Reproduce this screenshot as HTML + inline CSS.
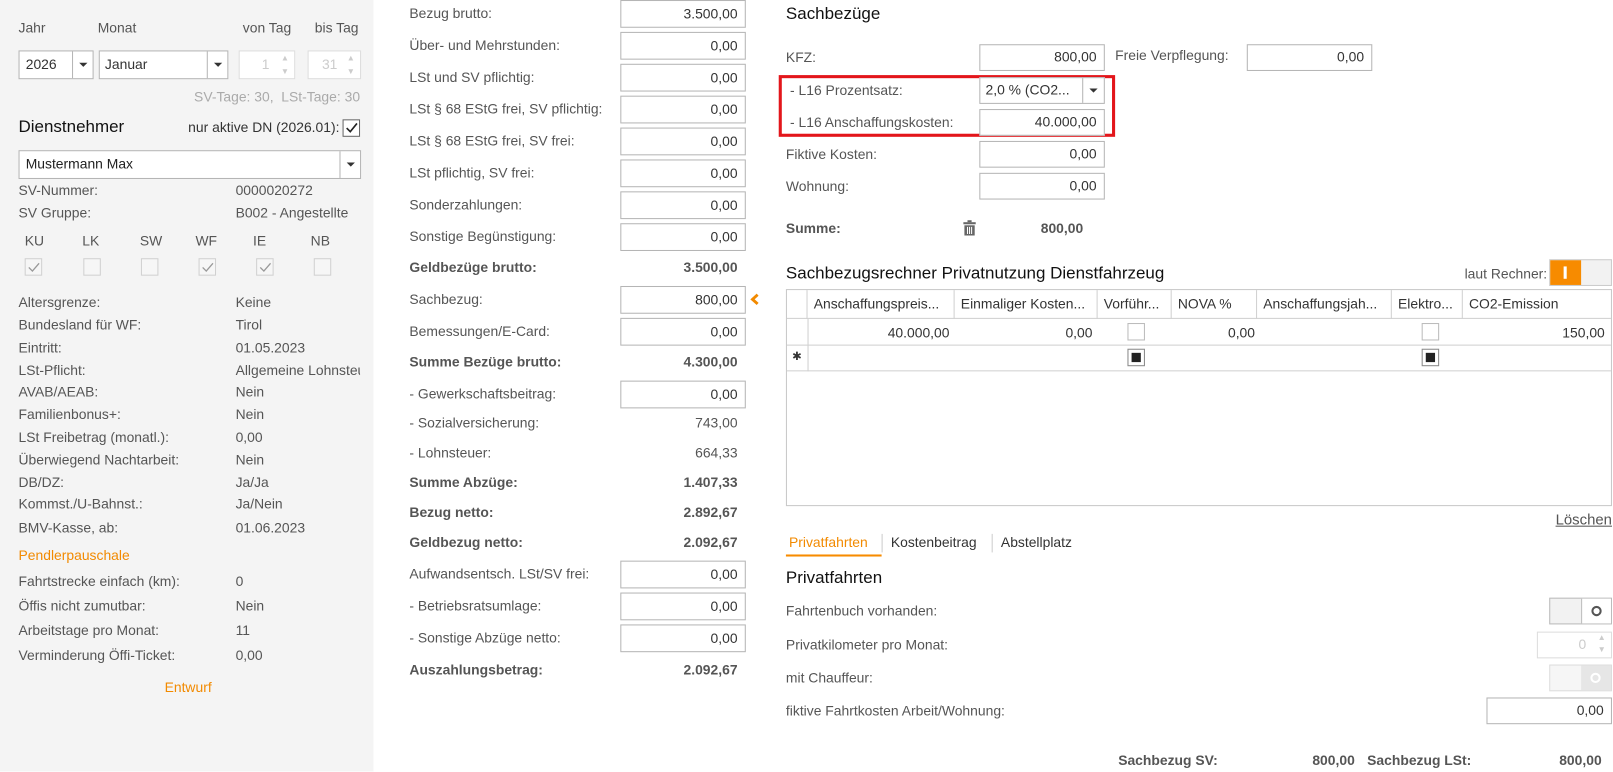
<!DOCTYPE html>
<html><head><meta charset="utf-8">
<style>
*{box-sizing:border-box;margin:0;padding:0}
html,body{width:1613px;height:771px;overflow:hidden;background:#fff}
#w{position:absolute;left:0;top:0;width:1568px;height:750px;transform:scale(1.0287);transform-origin:0 0;font-family:"Liberation Sans",sans-serif;font-size:13.5px;color:#555}
.a{position:absolute;white-space:nowrap}
.c{transform:translateY(-50%)}
.in{position:absolute;border:1px solid #b5b5b5;background:#fff;text-align:right;padding-right:7px;color:#333;font-size:13.5px}
.b{font-weight:bold;color:#555}
.cb{position:absolute;width:17px;height:17px;border:1px solid #bbb;background:#fff}
.cbd{border-color:#d0d0d0;background:#f6f6f6}
.cbd svg{position:absolute;left:2px;top:2px}
.arr{position:absolute;top:0;right:0;bottom:0;border-left:1px solid #b5b5b5}
.arr:after{content:"";position:absolute;left:50%;top:50%;margin:-2px 0 0 -4px;border:4px solid transparent;border-top:4px solid #333;border-bottom:0}
.or{color:#f28a00}
.th{position:absolute;top:0;height:28px;line-height:28px;border-right:1px solid #d0d0d0;padding-left:6px;color:#333;font-size:13.5px;overflow:hidden}
</style></head><body><div id="w">
<div class="a" style="left:0;top:0;width:363px;height:750px;background:#f4f4f4"></div>
<div class="a c" style="left:18px;top:27px">Jahr</div>
<div class="a c" style="left:95px;top:27px">Monat</div>
<div class="a c" style="left:236px;top:27px">von Tag</div>
<div class="a c" style="left:306px;top:27px">bis Tag</div>
<div class="in" style="left:18px;top:49px;width:73px;height:28px;text-align:left;padding-left:6px;line-height:26px">2026<div class="arr" style="width:20px"></div></div>
<div class="in" style="left:96px;top:49px;width:126px;height:28px;text-align:left;padding-left:5px;line-height:26px">Januar<div class="arr" style="width:20px"></div></div>
<div class="in" style="left:232px;top:49px;width:55px;height:28px;line-height:26px;color:#ccc;border-color:#ddd;padding-right:24px">1<span class="a" style="right:5px;top:0;font-size:8px;line-height:13px;color:#ccc">▲<br>▼</span></div>
<div class="in" style="left:299px;top:49px;width:52px;height:28px;line-height:26px;color:#ccc;border-color:#ddd;padding-right:22px">31<span class="a" style="right:5px;top:0;font-size:8px;line-height:13px;color:#ccc">▲<br>▼</span></div>
<div class="a c" style="right:1218px;top:94px;color:#aaa">SV-Tage: 30,&nbsp; LSt-Tage: 30</div>
<div class="a c" style="left:18px;top:124px;font-size:16.5px;color:#111">Dienstnehmer</div>
<div class="a c" style="right:1238px;top:124px;color:#333">nur aktive DN (2026.01):</div>
<div class="cb" style="left:333px;top:116px;border-color:#666"><svg width="15" height="15" style="position:absolute;left:0;top:0"><path d="M3 7.5 L6.5 11 L13 3" stroke="#222" stroke-width="1.6" fill="none"/></svg></div>
<div class="in" style="left:18px;top:146px;width:333px;height:28px;text-align:left;padding-left:6px;line-height:26px;color:#222">Mustermann Max<div class="arr" style="width:20px"></div></div>
<div class="a c" style="left:18px;top:185px">SV-Nummer:</div><div class="a c" style="left:229px;top:185px">0000020272</div>
<div class="a c" style="left:18px;top:207px">SV Gruppe:</div><div class="a c" style="left:229px;top:207px">B002 - Angestellte</div>
<div class="a c" style="left:24px;top:234px">KU</div><div class="a c" style="left:80px;top:234px">LK</div><div class="a c" style="left:136px;top:234px">SW</div><div class="a c" style="left:190px;top:234px">WF</div><div class="a c" style="left:246px;top:234px">IE</div><div class="a c" style="left:302px;top:234px">NB</div>
<div class="cb cbd" style="left:24px;top:251px"><svg width="12" height="12"><path d="M1 6 L4.5 9.5 L11 2" stroke="#999" stroke-width="1.3" fill="none"/></svg></div>
<div class="cb cbd" style="left:81px;top:251px"></div>
<div class="cb cbd" style="left:137px;top:251px"></div>
<div class="cb cbd" style="left:193px;top:251px"><svg width="12" height="12"><path d="M1 6 L4.5 9.5 L11 2" stroke="#999" stroke-width="1.3" fill="none"/></svg></div>
<div class="cb cbd" style="left:249px;top:251px"><svg width="12" height="12"><path d="M1 6 L4.5 9.5 L11 2" stroke="#999" stroke-width="1.3" fill="none"/></svg></div>
<div class="cb cbd" style="left:305px;top:251px"></div>
<div class="a c" style="left:18px;top:294px">Altersgrenze:</div><div class="a c" style="left:229px;top:294px">Keine</div>
<div class="a c" style="left:18px;top:316px">Bundesland für WF:</div><div class="a c" style="left:229px;top:316px">Tirol</div>
<div class="a c" style="left:18px;top:338px">Eintritt:</div><div class="a c" style="left:229px;top:338px">01.05.2023</div>
<div class="a c" style="left:18px;top:360px">LSt-Pflicht:</div><div class="a c" style="left:229px;top:360px;width:121px;overflow:hidden">Allgemeine Lohnsteuer</div>
<div class="a c" style="left:18px;top:381px">AVAB/AEAB:</div><div class="a c" style="left:229px;top:381px">Nein</div>
<div class="a c" style="left:18px;top:403px">Familienbonus+:</div><div class="a c" style="left:229px;top:403px">Nein</div>
<div class="a c" style="left:18px;top:425px">LSt Freibetrag (monatl.):</div><div class="a c" style="left:229px;top:425px">0,00</div>
<div class="a c" style="left:18px;top:447px">Überwiegend Nachtarbeit:</div><div class="a c" style="left:229px;top:447px">Nein</div>
<div class="a c" style="left:18px;top:469px">DB/DZ:</div><div class="a c" style="left:229px;top:469px">Ja/Ja</div>
<div class="a c" style="left:18px;top:490px">Kommst./U-Bahnst.:</div><div class="a c" style="left:229px;top:490px">Ja/Nein</div>
<div class="a c" style="left:18px;top:513px">BMV-Kasse, ab:</div><div class="a c" style="left:229px;top:513px">01.06.2023</div>
<div class="a c or" style="left:18px;top:540px">Pendlerpauschale</div>
<div class="a c" style="left:18px;top:565px">Fahrtstrecke einfach (km):</div><div class="a c" style="left:229px;top:565px">0</div>
<div class="a c" style="left:18px;top:589px">Öffis nicht zumutbar:</div><div class="a c" style="left:229px;top:589px">Nein</div>
<div class="a c" style="left:18px;top:613px">Arbeitstage pro Monat:</div><div class="a c" style="left:229px;top:613px">11</div>
<div class="a c" style="left:18px;top:637px">Verminderung Öffi-Ticket:</div><div class="a c" style="left:229px;top:637px">0,00</div>
<div class="a c or" style="left:160px;top:668px">Entwurf</div>

<!-- middle -->
<div class="a c" style="left:398px;top:13px">Bezug brutto:</div><div class="in" style="left:603px;top:0;width:122px;height:27px;line-height:25px">3.500,00</div>
<div class="a c" style="left:398px;top:44px">Über- und Mehrstunden:</div><div class="in" style="left:603px;top:31px;width:122px;height:27px;line-height:25px">0,00</div>
<div class="a c" style="left:398px;top:75px">LSt und SV pflichtig:</div><div class="in" style="left:603px;top:62px;width:122px;height:27px;line-height:25px">0,00</div>
<div class="a c" style="left:398px;top:106px">LSt § 68 EStG frei, SV pflichtig:</div><div class="in" style="left:603px;top:93px;width:122px;height:27px;line-height:25px">0,00</div>
<div class="a c" style="left:398px;top:137px">LSt § 68 EStG frei, SV frei:</div><div class="in" style="left:603px;top:124px;width:122px;height:27px;line-height:25px">0,00</div>
<div class="a c" style="left:398px;top:168px">LSt pflichtig, SV frei:</div><div class="in" style="left:603px;top:155px;width:122px;height:27px;line-height:25px">0,00</div>
<div class="a c" style="left:398px;top:199px">Sonderzahlungen:</div><div class="in" style="left:603px;top:186px;width:122px;height:27px;line-height:25px">0,00</div>
<div class="a c" style="left:398px;top:230px">Sonstige Begünstigung:</div><div class="in" style="left:603px;top:217px;width:122px;height:27px;line-height:25px">0,00</div>
<div class="a c b" style="left:398px;top:260px">Geldbezüge brutto:</div><div class="a c b" style="right:851px;top:260px">3.500,00</div>
<div class="a c" style="left:398px;top:291px">Sachbezug:</div><div class="in" style="left:603px;top:278px;width:122px;height:27px;line-height:25px">800,00</div>
<svg class="a" style="left:729px;top:285px" width="10" height="12"><path d="M7.5 1.5 L2.5 6 L7.5 10.5" stroke="#f28a00" stroke-width="2.8" fill="none"/></svg>
<div class="a c" style="left:398px;top:322px">Bemessungen/E-Card:</div><div class="in" style="left:603px;top:309px;width:122px;height:27px;line-height:25px">0,00</div>
<div class="a c b" style="left:398px;top:352px">Summe Bezüge brutto:</div><div class="a c b" style="right:851px;top:352px">4.300,00</div>
<div class="a c" style="left:398px;top:383px">- Gewerkschaftsbeitrag:</div><div class="in" style="left:603px;top:370px;width:122px;height:27px;line-height:25px">0,00</div>
<div class="a c" style="left:398px;top:411px">- Sozialversicherung:</div><div class="a c" style="right:851px;top:411px">743,00</div>
<div class="a c" style="left:398px;top:440px">- Lohnsteuer:</div><div class="a c" style="right:851px;top:440px">664,33</div>
<div class="a c b" style="left:398px;top:469px">Summe Abzüge:</div><div class="a c b" style="right:851px;top:469px">1.407,33</div>
<div class="a c b" style="left:398px;top:498px">Bezug netto:</div><div class="a c b" style="right:851px;top:498px">2.892,67</div>
<div class="a c b" style="left:398px;top:527px">Geldbezug netto:</div><div class="a c b" style="right:851px;top:527px">2.092,67</div>
<div class="a c" style="left:398px;top:558px">Aufwandsentsch. LSt/SV frei:</div><div class="in" style="left:603px;top:545px;width:122px;height:27px;line-height:25px">0,00</div>
<div class="a c" style="left:398px;top:589px">- Betriebsratsumlage:</div><div class="in" style="left:603px;top:576px;width:122px;height:27px;line-height:25px">0,00</div>
<div class="a c" style="left:398px;top:620px">- Sonstige Abzüge netto:</div><div class="in" style="left:603px;top:607px;width:122px;height:27px;line-height:25px">0,00</div>
<div class="a c b" style="left:398px;top:651px">Auszahlungsbetrag:</div><div class="a c b" style="right:851px;top:651px">2.092,67</div>

<!-- right -->
<div class="a c" style="left:764px;top:14px;font-size:16.5px;color:#111">Sachbezüge</div>
<div class="a c" style="left:764px;top:56px">KFZ:</div><div class="in" style="left:952px;top:43px;width:122px;height:26px;line-height:24px">800,00</div>
<div class="a c" style="left:1084px;top:54px">Freie Verpflegung:</div><div class="in" style="left:1212px;top:43px;width:122px;height:26px;line-height:24px">0,00</div>
<div class="a" style="left:757px;top:73px;width:327px;height:60px;border:3px solid #e3161b"></div>
<div class="a c" style="left:768px;top:88px">- L16 Prozentsatz:</div>
<div class="in" style="left:952px;top:75px;width:122px;height:26px;line-height:24px;text-align:left;padding-left:5px">2,0 % (CO2...<div class="arr" style="width:21px"></div></div>
<div class="a c" style="left:768px;top:119px">- L16 Anschaffungskosten:</div><div class="in" style="left:952px;top:106px;width:122px;height:26px;line-height:24px">40.000,00</div>
<div class="a c" style="left:764px;top:150px">Fiktive Kosten:</div><div class="in" style="left:952px;top:137px;width:122px;height:26px;line-height:24px">0,00</div>
<div class="a c" style="left:764px;top:181px">Wohnung:</div><div class="in" style="left:952px;top:168px;width:122px;height:26px;line-height:24px">0,00</div>
<div class="a c b" style="left:764px;top:222px">Summe:</div>
<svg class="a" style="left:936px;top:214px" width="13" height="15"><rect x="0.5" y="2" width="12" height="2" fill="#666"/><rect x="4.5" y="0" width="4" height="2" fill="#666"/><rect x="1.5" y="5" width="10" height="10" fill="#666"/><path d="M4.5 6.5V13.5M6.5 6.5V13.5M8.5 6.5V13.5" stroke="#fff" stroke-width="1"/></svg>
<div class="a c b" style="right:515px;top:222px">800,00</div>

<div class="a c" style="left:764px;top:266px;font-size:16.5px;color:#111">Sachbezugsrechner Privatnutzung Dienstfahrzeug</div>
<div class="a c" style="right:64px;top:266px">laut Rechner:</div>
<div class="a" style="left:1506px;top:252px;width:61px;height:26px;border:1px solid #ccc;background:#f2f2f2"><div style="position:absolute;left:0;top:0;width:30px;height:24px;background:#f78b00"><div style="position:absolute;left:13px;top:6px;width:3px;height:12px;background:#fff"></div></div></div>
<div class="a" style="left:764px;top:281px;width:803px;height:211px;border:1px solid #c8c8c8;background:#fff">
 <div style="position:absolute;left:0;top:0;width:801px;height:28px;border-bottom:1px solid #d0d0d0"></div>
 <div class="th" style="left:0;width:20px;padding:0"></div>
 <div class="th" style="left:20px;width:143px">Anschaffungspreis...</div>
 <div class="th" style="left:163px;width:139px">Einmaliger Kosten...</div>
 <div class="th" style="left:302px;width:72px">Vorführ...</div>
 <div class="th" style="left:374px;width:83px">NOVA %</div>
 <div class="th" style="left:457px;width:131px">Anschaffungsjah...</div>
 <div class="th" style="left:588px;width:69px">Elektro...</div>
 <div class="th" style="left:657px;width:144px;border-right:0">CO2-Emission</div>
 <div style="position:absolute;left:0;top:53px;width:801px;border-top:1px solid #d0d0d0"></div>
 <div style="position:absolute;left:0;top:78px;width:801px;border-top:1px solid #d0d0d0"></div>
 <div style="position:absolute;left:20px;top:28px;height:51px;border-left:1px solid #d0d0d0"></div>
 <div class="a" style="right:643px;top:34px;color:#333">40.000,00</div>
 <div class="a" style="right:504px;top:34px;color:#333">0,00</div>
 <div class="a" style="right:346px;top:34px;color:#333">0,00</div>
 <div class="a" style="right:6px;top:34px;color:#333">150,00</div>
 <div class="cb" style="left:331px;top:32px"></div><div class="cb" style="left:617px;top:32px"></div>
 <div class="cb" style="left:331px;top:57px;border-color:#888"><div style="position:absolute;left:3px;top:3px;width:9px;height:9px;background:#222"></div></div>
 <div class="cb" style="left:617px;top:57px;border-color:#888"><div style="position:absolute;left:3px;top:3px;width:9px;height:9px;background:#222"></div></div>
 <div class="a" style="left:5px;top:58px;font-size:11px;color:#333">✱</div>
</div>
<div class="a c" style="right:1px;top:506px;text-decoration:underline;font-size:14.5px">Löschen</div>
<div class="a c or" style="left:767px;top:527px">Privatfahrten</div>
<div class="a" style="left:764px;top:539px;width:93px;height:2px;background:#f78b00"></div>
<div class="a" style="left:857px;top:519px;height:18px;border-left:1px solid #ccc"></div>
<div class="a c" style="left:866px;top:527px;color:#333">Kostenbeitrag</div>
<div class="a" style="left:964px;top:519px;height:18px;border-left:1px solid #ccc"></div>
<div class="a c" style="left:973px;top:527px;color:#333">Abstellplatz</div>
<div class="a c" style="left:764px;top:562px;font-size:16.5px;color:#111">Privatfahrten</div>
<div class="a c" style="left:764px;top:594px">Fahrtenbuch vorhanden:</div>
<div class="a" style="left:1506px;top:581px;width:61px;height:26px;border:1px solid #bbb;background:#f2f2f2"><div style="position:absolute;left:30px;top:0;width:29px;height:24px;background:#fff;border-left:1px solid #bbb"><div style="position:absolute;left:9px;top:7px;width:10px;height:10px;border:2px solid #555;border-radius:50%"></div></div></div>
<div class="a c" style="left:764px;top:627px">Privatkilometer pro Monat:</div>
<div class="in" style="left:1494px;top:614px;width:73px;height:26px;line-height:24px;color:#ccc;border-color:#ddd;padding-right:24px">0<span class="a" style="right:5px;top:-1px;font-size:8px;line-height:12px;color:#ccc">▲<br>▼</span></div>
<div class="a c" style="left:764px;top:659px">mit Chauffeur:</div>
<div class="a" style="left:1506px;top:646px;width:61px;height:26px;border:1px solid #ddd;background:#f6f6f6"><div style="position:absolute;left:30px;top:0;width:29px;height:24px;background:#e6e6e6"><div style="position:absolute;left:9px;top:7px;width:10px;height:10px;border:2px solid #fff;border-radius:50%"></div></div></div>
<div class="a c" style="left:764px;top:691px">fiktive Fahrtkosten Arbeit/Wohnung:</div>
<div class="in" style="left:1445px;top:678px;width:122px;height:26px;line-height:24px">0,00</div>
<div class="a c b" style="left:1087px;top:739px">Sachbezug SV:</div><div class="a c b" style="right:251px;top:739px">800,00</div>
<div class="a c b" style="left:1329px;top:739px">Sachbezug LSt:</div><div class="a c b" style="right:11px;top:739px">800,00</div>
</div></body></html>
